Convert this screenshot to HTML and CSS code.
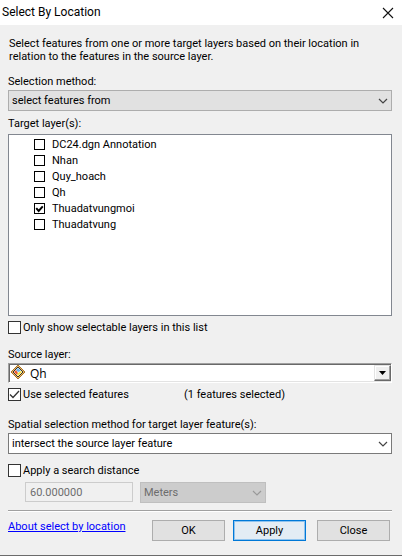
FILE: index.html
```html
<!DOCTYPE html>
<html lang="en">
<head>
    <meta charset="UTF-8">
    <meta name="viewport" content="width=device-width, initial-scale=1.0">
    <title>Select By Location</title>
    <link rel="stylesheet" href="styles.css">
</head>
<body>
    <div class="dialog">
        <header class="title-bar">
            <h1>Select By Location</h1>
            <button type="button" class="close-icon" aria-label="Close window">
                <svg width="12" height="12" viewBox="0 0 12 12"><path d="M1 1l10 10M11 1L1 11" stroke="#111" stroke-width="1.1" fill="none"/></svg>
            </button>
        </header>

        <form class="content">
            <p class="intro">Select features from one or more target layers based on their location in<br>relation to the features in the source layer.</p>

            <label class="field-label" for="method">Selection method:</label>
            <div class="select-wrap">
                <select id="method" class="select">
                    <option>select features from</option>
                </select>
                <svg class="chevron" width="10" height="6" viewBox="0 0 10 6"><path d="M1 1l4 4 4-4" stroke="#444" stroke-width="1.2" fill="none"/></svg>
            </div>

            <span class="field-label target-label" id="target-label">Target layer(s):</span>
            <ul class="layers" aria-labelledby="target-label">
                <li><label><input type="checkbox">DC24.dgn Annotation</label></li>
                <li><label><input type="checkbox">Nhan</label></li>
                <li><label><input type="checkbox">Quy_hoach</label></li>
                <li><label><input type="checkbox">Qh</label></li>
                <li><label><input type="checkbox" class="bold" checked>Thuadatvungmoi</label></li>
                <li><label><input type="checkbox">Thuadatvung</label></li>
            </ul>

            <label class="check"><input type="checkbox">Only show selectable layers in this list</label>

            <label class="field-label source-label" for="source">Source layer:</label>
            <div class="select-wrap">
                <select id="source" class="select sunken">
                    <option>Qh</option>
                </select>
                <svg class="layer-icon" width="16" height="16" viewBox="0 0 16 16">
                    <path d="M8 1l7 7-7 7-7-7z" fill="#e9b866" stroke="#a8742c"/>
                    <path d="M8 3l5 5-5 5-5-5z" fill="#fff" stroke="#3a3228"/>
                    <path d="M8 4l3 3-3 1-2-2z" fill="#6fb4e8"/>
                    <path d="M4 8l2-2 2 3-1 2z" fill="#ee5a2a"/>
                    <path d="M8 9l3-2 1 1-4 4-1-1z" fill="#f5e23c"/>
                </svg>
                <span class="drop-button"><svg width="7" height="4" viewBox="0 0 7 4"><path d="M0 0h7L3.5 4z" fill="#000"/></svg></span>
            </div>

            <div class="selected-row">
                <label class="check"><input type="checkbox" checked>Use selected features</label>
                <span class="count">(1 features selected)</span>
            </div>

            <label class="field-label spatial-label" for="spatial">Spatial selection method for target layer feature(s):</label>
            <div class="select-wrap">
                <select id="spatial" class="select white">
                    <option>intersect the source layer feature</option>
                </select>
                <svg class="chevron" width="10" height="6" viewBox="0 0 10 6"><path d="M1 1l4 4 4-4" stroke="#444" stroke-width="1.2" fill="none"/></svg>
            </div>

            <label class="check search-check"><input type="checkbox">Apply a search distance</label>
            <div class="distance-row">
                <input type="text" class="distance" aria-label="Search distance" value="60.000000" disabled>
                <div class="select-wrap units">
                    <select class="select" aria-label="Units" disabled>
                        <option>Meters</option>
                    </select>
                    <svg class="chevron" width="10" height="6" viewBox="0 0 10 6"><path d="M1 1l4 4 4-4" stroke="#999" stroke-width="1.2" fill="none"/></svg>
                </div>
            </div>

            <footer class="actions">
                <a href="#">About select by location</a>
                <button type="button" class="btn">OK</button>
                <button type="button" class="btn primary">Apply</button>
                <button type="button" class="btn close">Close</button>
            </footer>
        </form>
    </div>
</body>
</html>
```
FILE: styles.css
```css
* {
    margin: 0;
    padding: 0;
    box-sizing: border-box;
}

body {
    background-color: #f0f0f0;
    color: #000;
    font-family: Tahoma, Roboto, sans-serif;
    font-size: 11px;
    line-height: 13px;
}

input,
select,
button {
    font: inherit;
    color: inherit;
}

.dialog {
    border-bottom: 1px solid #6b6b6b;
}

.title-bar {
    display: flex;
    align-items: center;
    justify-content: space-between;
    height: 25px;
    padding: 0 8px 0 2px;
    background-color: #fff;
}

h1 {
    font-family: "Segoe UI", Roboto, sans-serif;
    font-size: 12px;
    font-weight: 400;
}

.close-icon {
    display: flex;
    border: none;
    background: none;
}

.content {
    display: flex;
    flex-direction: column;
    padding: 12px 10px 14px 8px;
}

.intro {
    padding-left: 1px;
    margin-bottom: 12px;
}

.field-label {
    margin-bottom: 2px;
}

.target-label {
    margin-top: 6px;
    margin-bottom: 4px;
}

.source-label {
    margin-top: 14px;
}

.spatial-label {
    margin-top: 17px;
}

.select-wrap {
    position: relative;
}

.select {
    display: block;
    width: 100%;
    height: 21px;
    padding: 0 24px 0 3px;
    border: 1px solid #adadad;
    border-radius: 0;
    background-color: #e1e1e1;
    line-height: 19px;
    appearance: none;
}

.select.white {
    border-color: #7a7a7a;
    background-color: #fff;
}

.select.sunken {
    height: 20px;
    padding-left: 21px;
    border: 1px solid #a0a0a0;
    border-right-color: #fff;
    border-bottom-color: #fff;
    background-color: #fff;
    box-shadow: inset 1px 1px #696969, inset -1px -1px #e3e3e3;
    font-family: "Segoe UI", "Open Sans", sans-serif;
    font-size: 12px;
}

.select:disabled {
    border-color: #bfbfbf;
    background-color: #ccc;
    color: #6d6d6d;
    opacity: 1;
}

.chevron {
    position: absolute;
    top: 8px;
    right: 4px;
    pointer-events: none;
}

.layer-icon {
    position: absolute;
    top: 1px;
    left: 2px;
    pointer-events: none;
}

.drop-button {
    position: absolute;
    top: 2px;
    right: 1px;
    display: flex;
    align-items: center;
    justify-content: center;
    width: 17px;
    height: 16px;
    border: 1px solid #e3e3e3;
    border-right-color: #696969;
    border-bottom-color: #696969;
    background-color: #f0f0f0;
    box-shadow: inset -1px -1px #a0a0a0, inset 1px 1px #fff;
    pointer-events: none;
}

.layers {
    height: 182px;
    padding: 1px 0 0 25px;
    border: 1px solid #828790;
    background-color: #fff;
    list-style: none;
}

.layers label {
    display: flex;
    align-items: center;
    gap: 7px;
    height: 16px;
}

input[type="checkbox"] {
    width: 13px;
    height: 13px;
    border: 1px solid #333;
    background: #fff center / 11px 11px no-repeat;
    appearance: none;
}

.layers input[type="checkbox"] {
    width: 11px;
    height: 11px;
    border-color: #000;
    background-size: 9px 9px;
}

input[type="checkbox"]:checked {
    background-image: url("data:image/svg+xml,%3Csvg xmlns='http://www.w3.org/2000/svg' viewBox='0 0 11 11'%3E%3Cpath d='M1 5.5l3 3L10 2' fill='none' stroke='%23333' stroke-width='1.3'/%3E%3C/svg%3E");
}

input[type="checkbox"].bold:checked {
    background-image: url("data:image/svg+xml,%3Csvg xmlns='http://www.w3.org/2000/svg' viewBox='0 0 11 11'%3E%3Cpath d='M1.5 5l3 3.5L9.5 3' fill='none' stroke='%23000' stroke-width='2.4'/%3E%3C/svg%3E");
}

.check {
    display: flex;
    align-items: center;
    gap: 2px;
}

.layers + .check {
    margin-top: 5px;
}

.selected-row {
    display: flex;
    margin-top: 5px;
}

.selected-row .check {
    width: 176px;
}

.search-check {
    margin-top: 10px;
}

.distance-row {
    display: flex;
    gap: 7px;
    margin-top: 5px;
    padding-left: 17px;
}

.distance {
    width: 108px;
    height: 20px;
    padding: 0 4px;
    border: 1px solid #ccc;
    background-color: #f0f0f0;
    color: #6d6d6d;
}

.units {
    width: 126px;
}

.actions {
    display: flex;
    gap: 8px;
    margin-top: 7px;
    padding: 9px 2px 0 0;
    border-top: 1px solid #a0a0a0;
    box-shadow: inset 0 1px #fff;
}

.actions a {
    margin-right: auto;
    color: #00f;
}

.btn {
    width: 73px;
    height: 21px;
    border: 1px solid #adadad;
    background-color: #e1e1e1;
}

.btn.primary {
    border: 1px solid #0078d7;
    background-color: #e3ecf4;
    box-shadow: inset 0 0 0 1px #8fc3ee;
}

.btn.close {
    margin-left: 3px;
}
```
